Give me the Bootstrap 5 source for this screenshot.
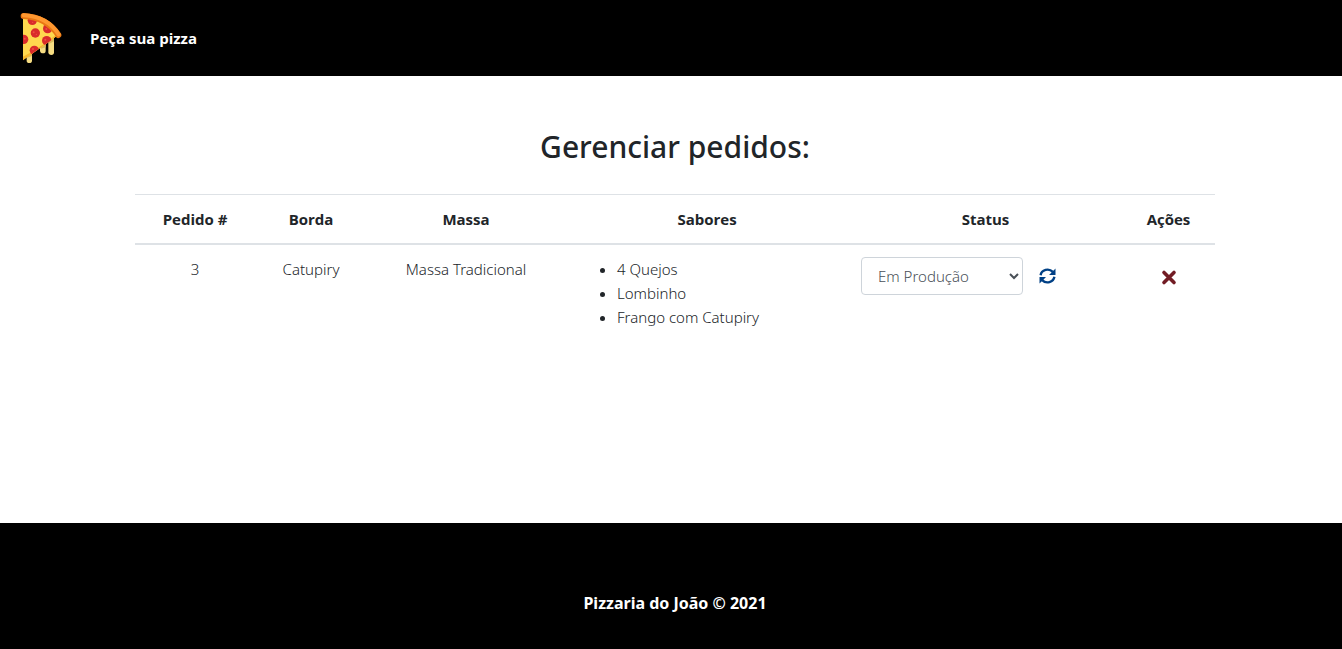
<!DOCTYPE html>
<html lang="pt-br">
<head>
<meta charset="utf-8">
<meta name="viewport" content="width=device-width, initial-scale=1">
<title>Gerenciar pedidos</title>
<link href="https://cdn.jsdelivr.net/npm/bootstrap@5.3.0/dist/css/bootstrap.min.css" rel="stylesheet">
<style>
  body { font-family: "Noto Sans", "Open Sans", sans-serif; font-size: 15px; line-height: 24px; font-weight: 350; color: #212529; }
  .topbar { min-height: 76px; padding: 0 20px; }
  .topbar .navbar-brand { margin-right: 28px; }
  .topbar .nav-link { color: #fff; font-family: "Open Sans", sans-serif; font-weight: 700; }
  .site-main { padding: 52px 12px 0 20px; }
  .site-title { font-size: 30px; line-height: 38px; font-weight: 500; margin-bottom: 28px; }
  .orders { max-width: 1080px; }
  .orders-table { --bs-table-color: #212529; border-top: 1px solid #dee2e6; table-layout: fixed; }
  .orders-table > :not(caption) > * > * { padding: 12px; border-bottom: 0; }
  .orders-table > thead > tr > th { border-bottom: 2px solid #dee2e6; font-family: "Open Sans", sans-serif; font-weight: 700; }
  .col-order { width: 120px; }
  .col-crust { width: 112px; }
  .col-dough { width: 198px; }
  .col-flavors { width: 284px; }
  .col-status { width: 273px; }
  .col-actions { width: 93px; }
  .flavors { padding-left: 40px; }
  .status-select { width: 162px; height: 38px; padding: 6px 12px; appearance: auto; font-size: 15px; font-weight: inherit; color: #495057; border-color: #ced4da; border-radius: 4px; }
  .icon-button { padding: 7px 12px; line-height: 24px; border: 0; }
  .refresh { color: #004085; }
  .remove { color: #721c24; }
  .site-footer { padding: 68px 12px 34px 20px; font-size: 16px; font-weight: 700; }
</style>
</head>
<body class="d-flex flex-column min-vh-100">
<header>
  <nav class="navbar navbar-expand topbar bg-black">
    <a class="navbar-brand p-0 d-flex" href="#" aria-label="Pizzaria do João">
      <svg width="42" height="52" viewBox="60 36 126 156" aria-hidden="true">
        <defs><clipPath id="slice"><path d="M69 50Q136 54 174 104L151 123 69 180Z"/></clipPath></defs>
        <g fill="#f5dc82"><path d="M80 160h16v22q0 7-8 7t-8-7z"/><path d="M120 132h17v20q0 8-8 8t-9-8z"/><path d="M145 112h17v45q0 8-8 8t-9-8z"/></g>
        <g fill="#dcb95c"><path d="M80 160h16v8l-14 5z"/><path d="M120 132h17v10l-14 4z"/><path d="M145 112h17v12l-14 7z"/></g>
        <path fill="#ffd84f" d="M69 50Q136 54 174 104L151 123 69 180Z"/>
        <path fill="#f6b62c" d="M172 101L174 106 69 181V170Q118 145 172 101"/>
        <g fill="#d92b2b" clip-path="url(#slice)"><circle cx="97" cy="61" r="14"/><circle cx="143" cy="86" r="14"/><circle cx="106" cy="99" r="14"/><circle cx="71" cy="118" r="14"/><circle cx="140" cy="122" r="14"/><circle cx="103" cy="151" r="14"/></g>
        <g fill="#ef5140" clip-path="url(#slice)"><circle cx="101" cy="97" r="3"/><circle cx="109" cy="103" r="2"/><circle cx="139" cy="87" r="3"/><circle cx="98" cy="67" r="2"/><circle cx="74" cy="116" r="3"/><circle cx="136" cy="119" r="3"/><circle cx="99" cy="147" r="3"/></g>
        <path d="M71 48Q140 52 175 105" fill="none" stroke="#e97712" stroke-width="18" stroke-linecap="round"/>
        <path d="M71 46Q141 49 176 103" fill="none" stroke="#ff9830" stroke-width="12" stroke-linecap="round"/>
      </svg>
    </a>
    <ul class="navbar-nav"><li class="nav-item"><a class="nav-link px-0" href="#">Peça sua pizza</a></li></ul>
  </nav>
</header>
<main class="site-main flex-grow-1">
  <h1 class="site-title text-center">Gerenciar pedidos:</h1>
  <div class="orders mx-auto">
    <table class="table orders-table text-center mb-0">
      <colgroup>
        <col class="col-order"><col class="col-crust"><col class="col-dough"><col class="col-flavors"><col class="col-status"><col class="col-actions">
      </colgroup>
      <thead>
        <tr><th scope="col">Pedido #</th><th scope="col">Borda</th><th scope="col">Massa</th><th scope="col">Sabores</th><th scope="col">Status</th><th scope="col">Ações</th></tr>
      </thead>
      <tbody>
        <tr>
          <td>3</td>
          <td>Catupiry</td>
          <td>Massa Tradicional</td>
          <td><ul class="flavors text-start mb-0"><li>4 Quejos</li><li>Lombinho</li><li>Frango com Catupiry</li></ul></td>
          <td>
            <form class="d-flex">
              <select class="form-control status-select" aria-label="Status do pedido"><option>Em Produção</option><option>Entrega</option><option>Concluído</option></select>
              <button type="button" class="btn icon-button refresh" aria-label="Atualizar status"><svg class="d-block" width="24" height="24" viewBox="0 0 24 24" fill="none" stroke="currentColor" stroke-width="2.4" aria-hidden="true"><path d="M5.600 11.200A7 6.500 0 0 1 17.800 7.900M19.400 12.800A7 6.500 0 0 1 7.200 16.100"/><path fill="currentColor" stroke="none" d="M20.500 4.500v6.500h-6.500zM4.500 19.500v-6.500h6.500z"/></svg></button>
            </form>
          </td>
          <td><button type="button" class="btn icon-button remove" aria-label="Remover pedido"><svg class="d-block" width="24" height="24" viewBox="0 0 24 24" fill="none" stroke="currentColor" stroke-width="3.6" stroke-linecap="round" aria-hidden="true"><path d="M7 8.500l10 10M17 8.500l-10 10"/></svg></button></td>
        </tr>
      </tbody>
    </table>
  </div>
</main>
<footer class="site-footer bg-black text-white text-center">Pizzaria do João © 2021</footer>
<script src="https://cdn.jsdelivr.net/npm/bootstrap@5.3.0/dist/js/bootstrap.bundle.min.js"></script>
</body>
</html>
